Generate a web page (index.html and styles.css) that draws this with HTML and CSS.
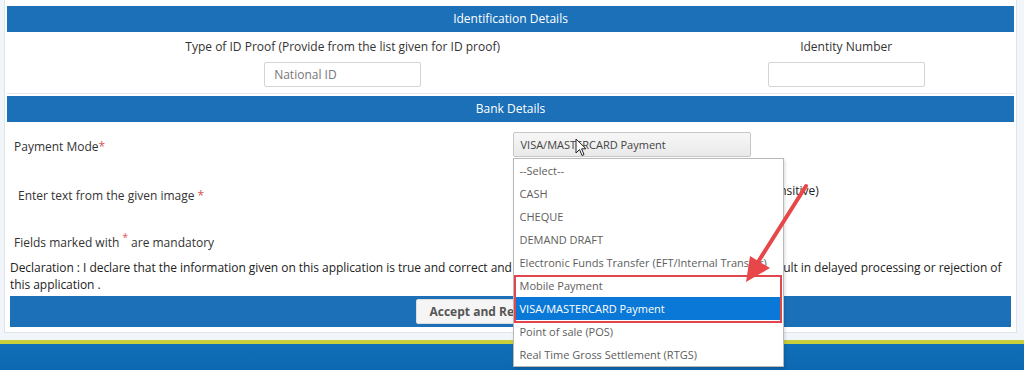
FILE: index.html
```html
<!DOCTYPE html>
<html>
<head>
    <title>Registration - Bank Details</title>
    <meta name="viewport" content="width=device-width, initial-scale=1">
    <link rel="stylesheet" href="styles.css">
</head>
<body>
    <div class="panel">
        <section class="box">
            <h2 class="box-head">Identification Details</h2>
            <div class="id-grid">
                <div class="id-col">
                    <label>Type of ID Proof (Provide from the list given for ID proof)</label>
                    <input class="text-input" type="text" placeholder="National ID">
                </div>
                <div class="id-col">
                    <label>Identity Number</label>
                    <input class="text-input" type="text">
                </div>
            </div>
        </section>

        <section class="box bank">
            <h2 class="box-head">Bank Details</h2>

            <div class="form-row pay-row">
                <div class="row-label">Payment Mode<span class="req">*</span></div>
                <div class="select-wrap">
                    <div class="select-box">VISA/MASTERCARD Payment</div>

                    <!-- mouse pointer -->
                    <svg class="pointer" width="12" height="19" viewBox="0 0 12 19">
                        <path d="M1 1 L1 15 L4.5 11.5 L7 17.5 L9 16.6 L6.6 10.8 L11 10.8 Z" fill="#fff" stroke="#222" stroke-width="1" stroke-linejoin="round"/>
                    </svg>

                    <ul class="dropdown">
                        <li>--Select--</li>
                        <li>CASH</li>
                        <li>CHEQUE</li>
                        <li>DEMAND DRAFT</li>
                        <li>Electronic Funds Transfer (EFT/Internal Transfer)</li>
                        <li>Mobile Payment</li>
                        <li class="active">VISA/MASTERCARD Payment</li>
                        <li>Point of sale (POS)</li>
                        <li>Real Time Gross Settlement (RTGS)</li>
                    </ul>
                    <div class="mark-box"></div>

                    <!-- annotation arrow -->
                    <svg class="mark-arrow" width="80" height="110" viewBox="0 0 80 110">
                        <line x1="62" y1="4" x2="14" y2="80" stroke="#e8474a" stroke-width="4" stroke-linecap="round"/>
                        <path d="M2 100 L6 74 L26 86 Z" fill="#e8474a"/>
                    </svg>
                </div>
            </div>

            <div class="form-row captcha-row">
                <div class="row-label">Enter text from the given image <span class="req">*</span></div>
                <div class="captcha-note">(Case Sensitive)</div>
            </div>

            <div class="mandatory">Fields marked with <sup class="req">*</sup> are mandatory</div>

            <p class="declaration">Declaration : I declare that the information given on this application is true and correct and that any false or misleading information may result in delayed processing or rejection of this application .</p>

            <div class="action-bar">
                <button class="accept-btn">Accept and Register</button>
            </div>
        </section>
    </div>

    <div class="site-foot"></div>
</body>
</html>
```

FILE: styles.css
```css
body {
    margin: 0;
    background: #f2f6fa;
    font-family: "Open Sans", "Noto Sans", sans-serif;
    font-size: 12px;
    color: #333;
}
.panel {
    margin: 0 7px 0 4px;
    padding: 6px 2px 5px 2px;
    background: #fff;
    border: 1px solid #dde4ec;
    border-top: none;
}
.box-head {
    margin: 0;
    height: 26px;
    line-height: 26px;
    background: #1b70b8;
    color: #fff;
    font-size: 12px;
    font-weight: normal;
    text-align: center;
}
.id-grid {
    display: grid;
    grid-template-columns: 2fr 1fr;
    padding: 6px 0 6px;
    border-bottom: 1px solid #e3e8ee;
}
.id-col {
    display: flex;
    flex-direction: column;
    align-items: center;
    gap: 6px;
}
.id-col label {
    line-height: 18px;
}
.text-input {
    box-sizing: border-box;
    width: 157px;
    height: 25px;
    padding: 0 9px;
    border: 1px solid #d4d4d4;
    border-radius: 2px;
    font-family: inherit;
    font-size: 12px;
    color: #555;
}
.text-input::placeholder {
    color: #777;
}
.bank {
    margin-top: 2px;
}
.form-row {
    display: grid;
    grid-template-columns: 1fr 1fr;
    align-items: center;
}
.pay-row {
    padding-top: 10px;
    height: 38px;
    align-items: start;
}
.pay-row .row-label {
    padding: 6px 0 0 7px;
}
.req {
    color: #d9534f;
}
.select-wrap {
    position: relative;
    padding-left: 2px;
}
.select-box {
    box-sizing: border-box;
    width: 238px;
    height: 25px;
    line-height: 23px;
    padding-left: 7px;
    border: 1px solid #c6c6c6;
    border-radius: 2px;
    background: linear-gradient(#f7f7f7, #e9e9e9);
    color: #444;
    font-size: 11px;
}
.pointer {
    position: absolute;
    left: 64px;
    top: 6px;
}
.dropdown {
    position: absolute;
    left: 2px;
    top: 26px;
    width: 269px;
    margin: 0;
    padding: 0;
    list-style: none;
    background: #fff;
    border: 1px solid #b9b9b9;
    box-shadow: 1px 2px 3px rgba(0, 0, 0, 0.15);
    font-size: 11px;
    z-index: 2;
}
.dropdown li {
    height: 23px;
    line-height: 23px;
    padding-left: 5px;
    margin: 0 1px;
    color: #5e5e5e;
    white-space: nowrap;
    overflow: hidden;
}
.dropdown li.active {
    background: #0a78d7;
    color: #fff;
}
.mark-box {
    position: absolute;
    left: 3px;
    top: 143px;
    width: 264px;
    height: 44px;
    border: 2px solid #e0474c;
    z-index: 3;
}
.mark-arrow {
    position: absolute;
    left: 233px;
    top: 50px;
    z-index: 4;
}
.captcha-row {
    height: 50px;
}
.captcha-row .row-label {
    padding-left: 11px;
}
.captcha-note {
    padding-left: 222px;
    padding-bottom: 10px;
    color: #222;
}
.mandatory {
    padding: 8px 0 0 7px;
    height: 31px;
    line-height: 18px;
}
.mandatory sup {
    font-size: 10px;
    vertical-align: 6px;
}
.declaration {
    margin: 0 0 3px 3px;
    line-height: 17px;
    letter-spacing: -0.05px;
    color: #222;
}
.action-bar {
    display: flex;
    justify-content: center;
    margin: 0 3px;
    padding: 3px 0;
    background: #1b70b8;
}
.accept-btn {
    height: 25px;
    width: 190px;
    padding-left: 13px;
    text-align: left;
    border: 1px solid #ddd;
    border-radius: 2px;
    background: #f5f5f5;
    color: #555;
    font-family: inherit;
    font-size: 12px;
    font-weight: bold;
}
.site-foot {
    margin-top: 7px;
    height: 40px;
    border-top: 4px solid #c8cf3c;
    background: linear-gradient(#0f6fb8, #0b64ad);
}
```
